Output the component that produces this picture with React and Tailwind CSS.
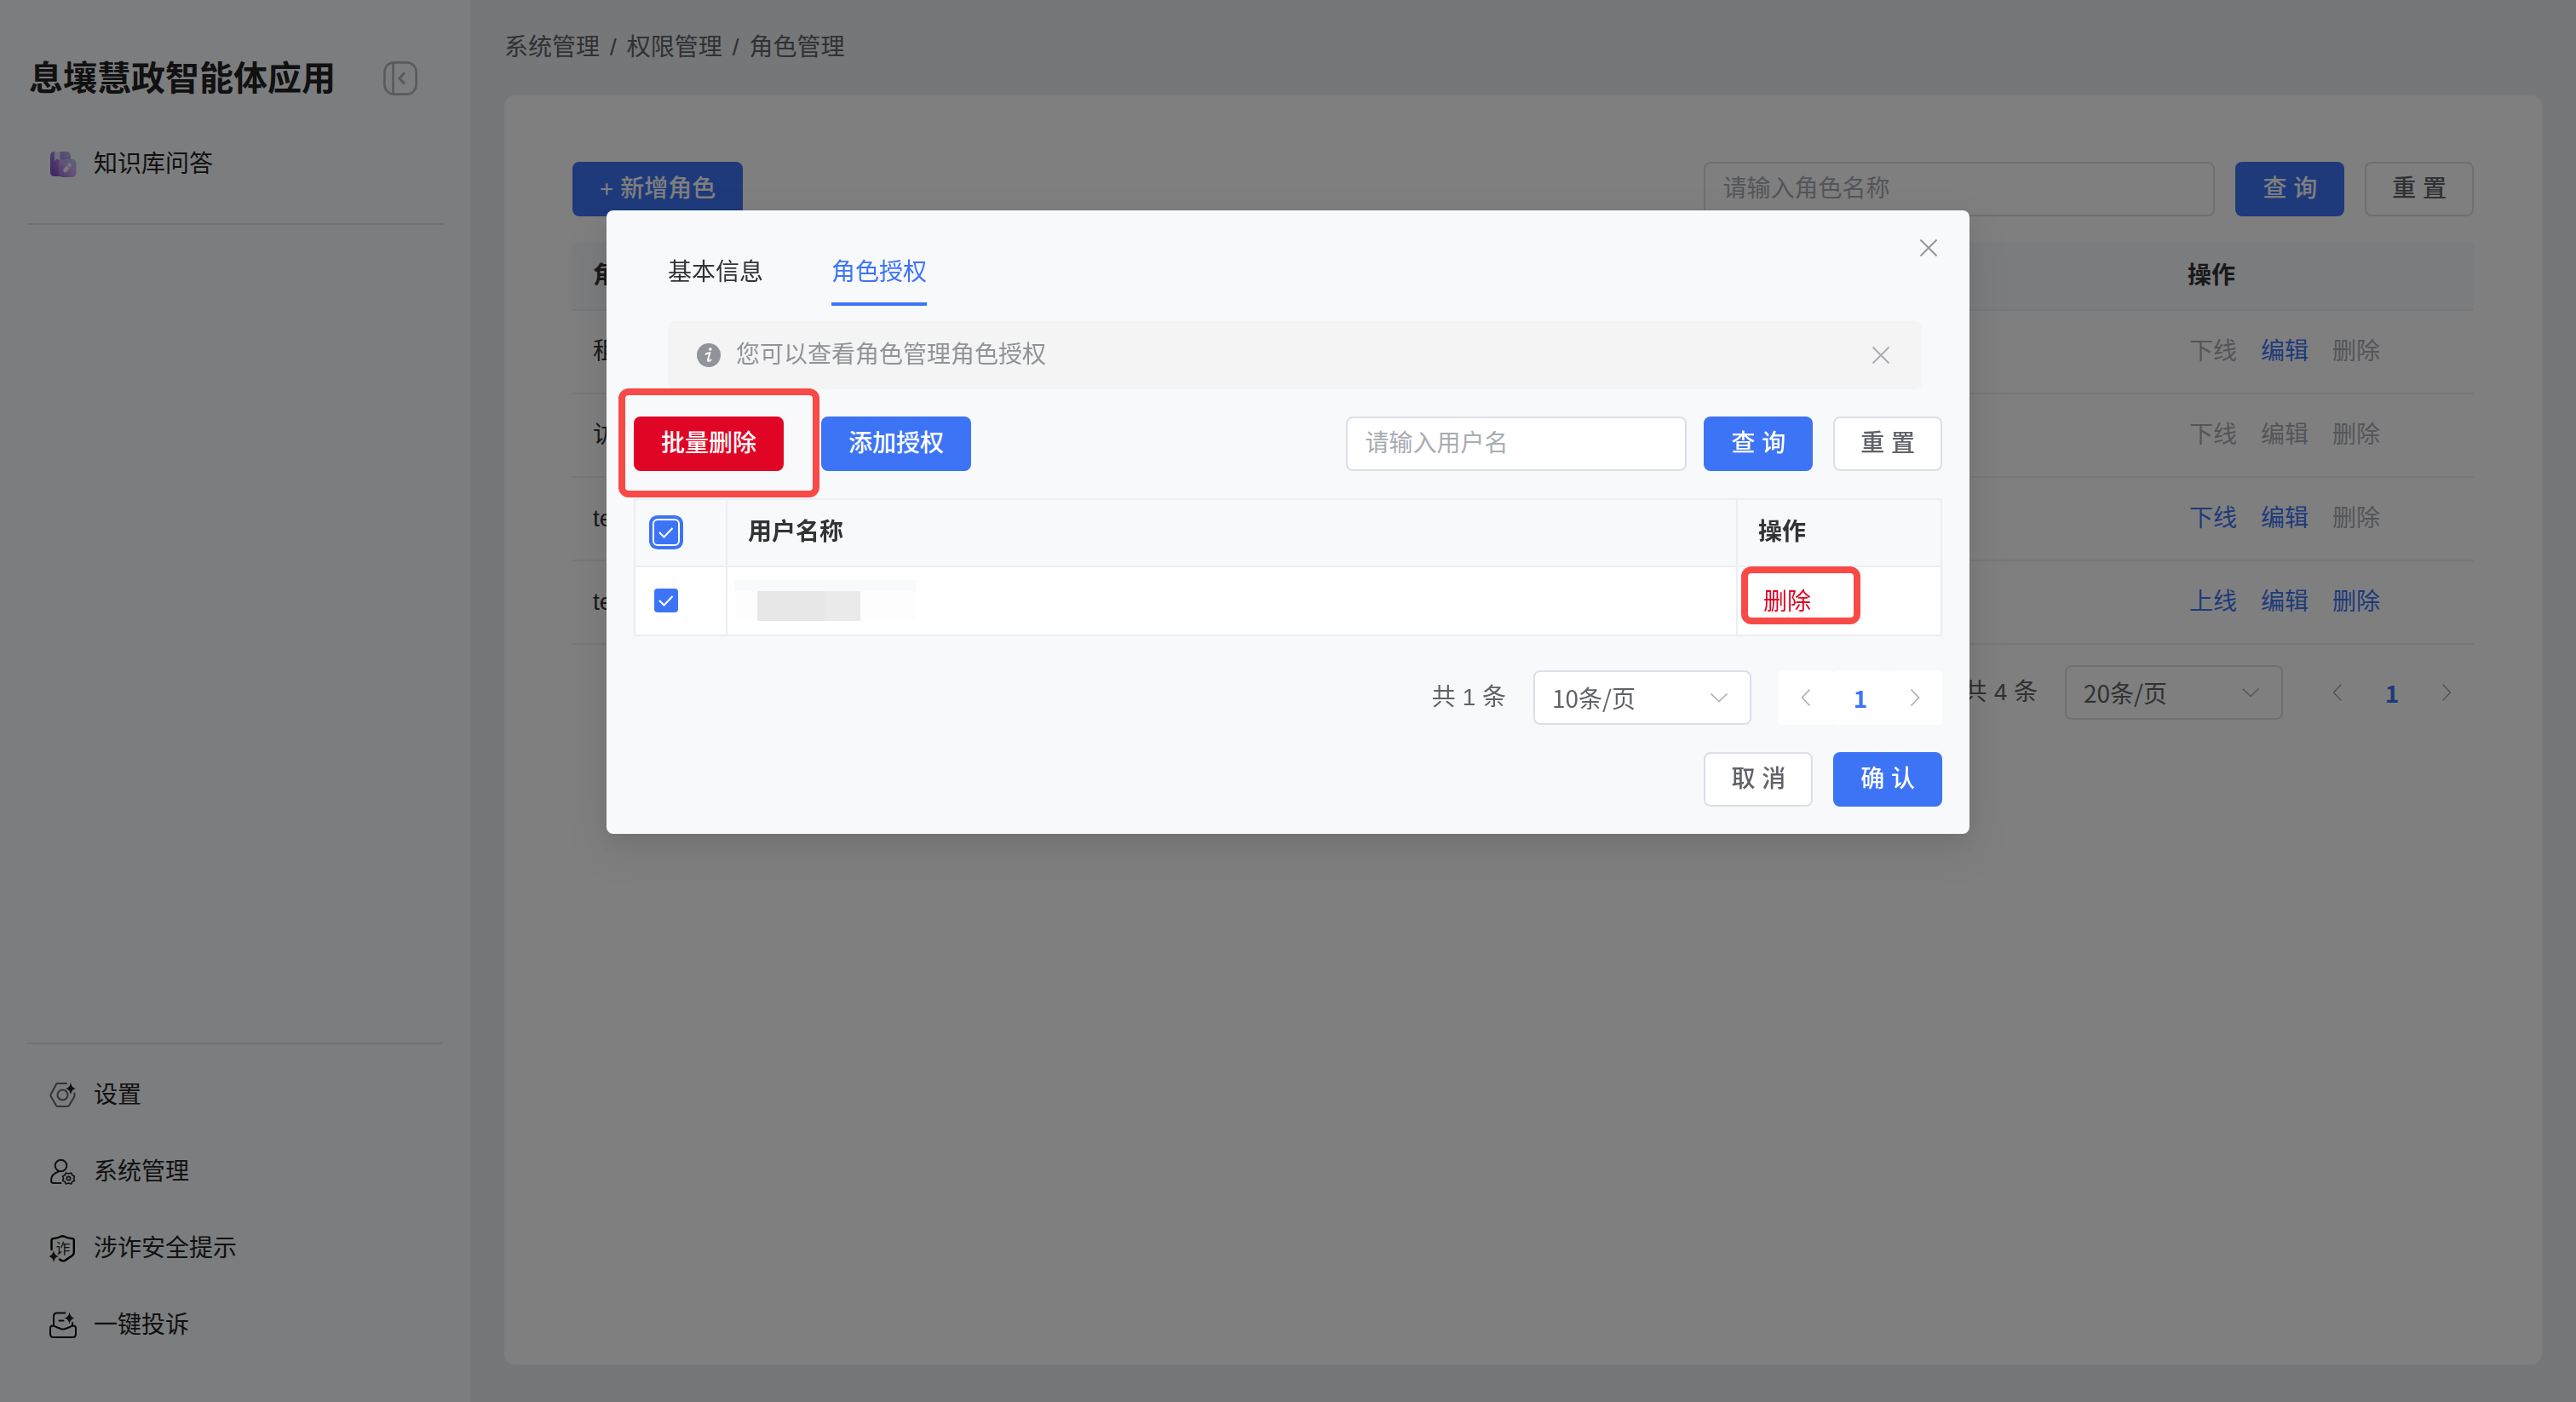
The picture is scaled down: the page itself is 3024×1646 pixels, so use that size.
import { clsx } from "clsx";

const roles = [
  { name: "租户管理员", actions: [["下线", false], ["编辑", true], ["删除", false]] },
  { name: "访客", actions: [["下线", false], ["编辑", false], ["删除", false]] },
  { name: "test1", actions: [["下线", true], ["编辑", true], ["删除", false]] },
  { name: "test2", actions: [["上线", true], ["编辑", true], ["删除", true]] },
];

const SPARK = "M0-7Q1-1 6 0Q1 1 0 7Q-1 1-6 0Q-1-1 0-7Z";

function CollapseIcon() {
  return (
    <svg className="size-10" viewBox="0 0 40 40" fill="none" stroke="#b3b4c2" strokeWidth="2.6">
      <rect x="1.4" y="1.4" width="37.2" height="37.2" rx="11" />
      <path d="M11.500 2V38" />
      <path d="M24 14.500L19 20L24 25.500" strokeWidth="3.2" strokeLinecap="round" strokeLinejoin="round" />
    </svg>
  );
}

function BookIcon() {
  return (
    <svg className="size-8" viewBox="0 0 32 32">
      <defs>
        <linearGradient id="book-back" x1="0" y1="1" x2="1" y2="0">
          <stop offset="0" stopColor="#7442c8" />
          <stop offset="1" stopColor="#c2b6f5" />
        </linearGradient>
        <linearGradient id="book-front" x1="0" y1="1" x2="1" y2="0">
          <stop offset="0" stopColor="#9a63dc" />
          <stop offset="0.5" stopColor="#c9a2ee" />
          <stop offset="1" stopColor="#b4cbf5" />
        </linearGradient>
      </defs>
      <path d="M6 1H20Q25 1 25 6V30H6Q1 30 1 25V6Q1 1 6 1Z" fill="url(#book-back)" />
      <path d="M6 1H12.500V12L9 9.500L6 12Z" fill="#e4dcf7" />
      <rect x="10.500" y="10" width="21" height="21" rx="5" fill="url(#book-front)" />
      <path d="M18.500 23L23.500 17" stroke="#f4effc" strokeWidth="4.600" strokeLinecap="round" />
      <path d="M20.500 17L24 20" stroke="#b48fe6" strokeWidth="1" />
    </svg>
  );
}

function SettingsIcon() {
  return (
    <svg className="size-8" viewBox="0 0 32 32" fill="none" stroke="#666" strokeWidth="2" strokeLinejoin="round" strokeLinecap="round">
      <path d="M20 2H9.500Q8.500 2 8 2.900L1.600 15Q1 16 1.600 17L8 28.100Q8.500 29 9.500 29H21Q22.500 29 23 28.100L29 18Q30 16 29.300 13.500" />
      <circle cx="15.500" cy="15.500" r="6" />
      <path d={SPARK} transform="translate(25 8)" fill="#222" stroke="none" />
    </svg>
  );
}

function UserGearIcon() {
  return (
    <svg className="size-8" viewBox="0 0 32 32" fill="none" stroke="#222" strokeWidth="2" strokeLinejoin="round" strokeLinecap="round">
      <circle cx="13.500" cy="8.500" r="6.800" />
      <path d="M11 15.500Q2 18 2 26Q2 29 5 29H13.500" />
      <path
        d="M19.500 17L22.500 18L25.500 17L27 19.800L29.500 21L28.500 23.500L29.500 26L27 27.200L25.500 30L22.500 29L19.500 30L18 27.200L15.500 26L16.500 23.500L15.500 21L18 19.800Z"
        strokeWidth="1.700"
      />
      <circle cx="22.500" cy="23.500" r="2.200" strokeWidth="1.700" />
    </svg>
  );
}

function ShieldIcon() {
  return (
    <svg className="size-8" viewBox="0 0 32 32" fill="none" stroke="#000" strokeWidth="2.400" strokeLinejoin="round" strokeLinecap="round">
      <path d="M2.500 17V6Q2.500 4.500 4 4.200Q10 3.500 13.500 1.700Q15.500 0.800 17.500 1.700Q21 3.500 27 4.200Q28.800 4.500 28.800 6V20Q28.800 22.500 27 24L18 30Q15.500 31.300 12 28.500" />
      <text x="7.500" y="21.500" fontSize="17" fill="#222" stroke="none">诈</text>
      <path d={SPARK} transform="translate(5 25)" fill="#222" stroke="none" />
    </svg>
  );
}

function ComplaintIcon() {
  return (
    <svg className="size-8" viewBox="0 0 32 32" fill="none" stroke="#111" strokeWidth="2" strokeLinejoin="round" strokeLinecap="round">
      <path d="M18.500 1.500H9Q5 1.500 5 5.500V16.500M27 13V16.500" />
      <path d="M11.500 10.500H16.500" />
      <path d="M4 16.500Q1 16.500 1 19.500V26Q1 30 4.500 30H27.500Q31 30 31 26V19.500Q31 16.500 28 16.500Q26 16.500 24 18L18 20.200Q16 21 14 20.200L8 18Q6 16.500 4 16.500Z" />
      <path d={SPARK} transform="translate(23.500 7.500)" fill="#222" stroke="none" />
    </svg>
  );
}

function CloseIcon() {
  return (
    <svg className="size-6" viewBox="0 0 24 24" fill="none" stroke="currentColor" strokeWidth="1.8">
      <path d="M2.500 2.500L21.500 21.500M21.500 2.500L2.500 21.500" />
    </svg>
  );
}

function Chevron({ className }) {
  return (
    <svg className={clsx("size-6", className)} viewBox="0 0 24 24" fill="none" stroke="currentColor" strokeWidth="1.600">
      <path d="M2.500 7.500L12 16.500L21.500 7.500" />
    </svg>
  );
}

function Button({ variant = "default", children }) {
  return (
    <button
      type="button"
      className={clsx(
        "h-16 shrink-0 rounded-lg px-8 font-medium whitespace-nowrap",
        variant === "primary" && "bg-[#3d74f6] text-white",
        variant === "danger" && "bg-[#e10525] text-white",
        variant === "default" && "border-2 border-[#dcdfe6] bg-white px-[30px] text-[#606266]"
      )}
    >
      {children}
    </button>
  );
}

function Pagination({ total, size }) {
  return (
    <div className="flex items-center justify-end gap-8 text-[#606266]">
      <span>共 {total} 条</span>
      <div className="relative">
        <select
          aria-label="每页条数"
          className="h-16 w-64 appearance-none rounded-lg border-2 border-[#dcdfe6] bg-white px-5 font-['Noto_Sans_CJK_SC',sans-serif]"
        >
          <option>{size}条/页</option>
        </select>
        <Chevron className="pointer-events-none absolute top-5 right-[26px] text-[#a8abb2]" />
      </div>
      <div className="flex text-[#a8abb2]">
        <button type="button" aria-label="上一页" className="flex size-16 items-center justify-center rounded bg-white">
          <Chevron className="rotate-90" />
        </button>
        <button type="button" className="size-16 rounded bg-white font-['Noto_Sans_CJK_SC',sans-serif] font-bold text-[#3d74f6]">
          1
        </button>
        <button type="button" aria-label="下一页" className="flex size-16 items-center justify-center rounded bg-white">
          <Chevron className="-rotate-90" />
        </button>
      </div>
    </div>
  );
}

function Checkbox({ label, focused }) {
  return (
    <span className="relative block size-7">
      <input
        type="checkbox"
        defaultChecked
        aria-label={label}
        className={clsx(
          "block size-7 appearance-none rounded bg-[#3d74f6]",
          focused && "ring-4 ring-[#3d74f6] ring-offset-2 ring-offset-white"
        )}
      />
      <svg className="pointer-events-none absolute inset-0 size-7" viewBox="0 0 28 28" fill="none" stroke="#fff" strokeWidth="2">
        <path d="M6 14L11.500 19.500L21.500 9" />
      </svg>
    </span>
  );
}

function Sidebar() {
  const links = [
    ["设置", SettingsIcon],
    ["系统管理", UserGearIcon],
    ["涉诈安全提示", ShieldIcon],
    ["一键投诉", ComplaintIcon],
  ];
  return (
    <aside className="flex w-[552px] shrink-0 flex-col bg-[#f9fafd] px-8 text-[#222]">
      <div className="mt-16 flex h-14 items-center justify-between pr-[30px] pl-0.5">
        <h1 className="text-[40px] font-bold">息壤慧政智能体应用</h1>
        <button type="button" aria-label="收起菜单">
          <CollapseIcon />
        </button>
      </div>
      <a href="#" className="mt-7 flex h-[90px] items-center gap-5 px-[26px]">
        <BookIcon />
        知识库问答
      </a>
      <div className="mt-6 grow border-y-2 border-[#e3e5e8]" />
      <nav className="mt-[15px] mb-[45px] flex flex-col">
        {links.map(([label, Icon]) => (
          <a key={label} href="#" className="flex h-[90px] items-center gap-5 px-[26px]">
            <Icon />
            {label}
          </a>
        ))}
      </nav>
    </aside>
  );
}

function RolePage() {
  return (
    <main className="flex grow flex-col bg-[#eceef1] px-10 pb-11">
      <div className="flex h-28 items-center gap-3 text-[#606266]">
        <span>系统管理</span>
        <span>/</span>
        <span>权限管理</span>
        <span>/</span>
        <span>角色管理</span>
      </div>
      <section className="grow rounded-xl bg-white px-20 pt-[78px]">
        <div className="flex items-center gap-6">
          <Button variant="primary">+ 新增角色</Button>
          <input
            aria-label="角色名称"
            placeholder="请输入角色名称"
            className="ml-auto h-16 w-[600px] rounded-lg border-2 border-[#dcdfe6] px-5 placeholder:text-[#a8abb2]"
          />
          <Button variant="primary">查 询</Button>
          <Button>重 置</Button>
        </div>
        <table className="mt-[31px] w-full table-fixed border-separate border-spacing-0 text-left text-[#333]">
          <thead>
            <tr className="h-20 bg-[#f7f9fc]">
              <th className="border-b-2 border-[#ebeef5] px-6 font-bold">角色</th>
              <th className="w-[360px] border-b-2 border-[#ebeef5] px-6 font-bold">操作</th>
            </tr>
          </thead>
          <tbody>
            {roles.map((role) => (
              <tr key={role.name} className="h-[98px]">
                <td className="border-b-2 border-[#ebeef5] px-6">{role.name}</td>
                <td className="border-b-2 border-[#ebeef5] px-[26px]">
                  <div className="flex gap-7">
                    {role.actions.map(([label, enabled]) => (
                      <button
                        key={label}
                        type="button"
                        disabled={!enabled}
                        className={enabled ? "text-[#3d74f6]" : "text-[#a8abb2]"}
                      >
                        {label}
                      </button>
                    ))}
                  </div>
                </td>
              </tr>
            ))}
          </tbody>
        </table>
        <div className="mt-6">
          <Pagination total={4} size={20} />
        </div>
      </section>
    </main>
  );
}

function AuthDialog() {
  return (
    <div
      role="dialog"
      aria-label="角色授权"
      className="relative w-[1600px] max-w-full rounded-lg bg-[#f7f9fb] px-8 pb-8 text-[#333] shadow-[0_12px_32px_rgba(0,0,0,0.08),0_18px_56px_16px_rgba(0,0,0,0.05)]"
    >
      <button type="button" aria-label="关闭" className="absolute top-8 right-9 text-[#909399]">
        <CloseIcon />
      </button>
      <div role="tablist" className="flex gap-20 px-10 pt-8">
        <button type="button" role="tab" className="h-20 border-b-4 border-transparent pt-1.5">
          基本信息
        </button>
        <button type="button" role="tab" aria-selected="true" className="h-20 border-b-4 border-[#3d74f6] pt-1.5 text-[#3d74f6]">
          角色授权
        </button>
      </div>
      <div className="mt-[18px] mr-6 ml-10 flex h-20 items-center rounded-lg bg-[#f4f4f4] pr-9 pl-[34px] text-[#909399]">
        <svg className="mr-[18px] size-7" viewBox="0 0 28 28">
          <circle cx="14" cy="14" r="14" fill="#909399" />
          <circle cx="15.800" cy="7" r="1.800" fill="#fff" />
          <path d="M10.500 12.800Q13.500 10.800 15.300 11.300L13 19.500Q12.500 22.500 16.500 19.500" fill="none" stroke="#fff" strokeWidth="2" strokeLinecap="round" />
        </svg>
        您可以查看角色管理角色授权
        <button type="button" aria-label="关闭提示" className="ml-auto text-[#a8abb2]">
          <CloseIcon />
        </button>
      </div>
      <div className="mt-8 flex items-center">
        <div className="relative mr-11">
          <Button variant="danger">批量删除</Button>
          <div className="pointer-events-none absolute -top-[33px] -right-[42px] -bottom-[31px] -left-[18px] rounded-xl border-8 border-[#f84a46]" />
        </div>
        <Button variant="primary">添加授权</Button>
        <input
          aria-label="用户名"
          placeholder="请输入用户名"
          className="mr-5 ml-auto h-16 w-[400px] rounded-lg border-2 border-[#dcdfe6] bg-white px-5 placeholder:text-[#a8abb2]"
        />
        <div className="flex gap-6">
          <Button variant="primary">查 询</Button>
          <Button>重 置</Button>
        </div>
      </div>
      <table className="mt-8 w-full table-fixed border-separate border-spacing-0 border-t-2 border-l-2 border-[#ebeef5] text-left">
        <thead>
          <tr className="h-[79px]">
            <th className="w-[108px] border-r-2 border-b-2 border-[#ebeef5] px-[22px]">
              <Checkbox label="全选" focused />
            </th>
            <th className="border-r-2 border-b-2 border-[#ebeef5] px-6 font-bold">用户名称</th>
            <th className="w-60 border-r-2 border-b-2 border-[#ebeef5] px-6 font-bold">操作</th>
          </tr>
        </thead>
        <tbody>
          <tr className="h-[81px] bg-white">
            <td className="border-r-2 border-b-2 border-[#ebeef5] px-[22px]">
              <Checkbox label="选择用户" />
            </td>
            <td className="border-r-2 border-b-2 border-[#ebeef5] px-2">
              <div className="h-12 w-[214px] bg-[#fdfdfd]">
                <div className="h-[13px] bg-[#f9fafc]" />
                <div className="ml-[27px] flex h-[35px] w-[121px]">
                  <div className="w-20 bg-[#e7e7e7]" />
                  <div className="grow bg-[#eaeaea]" />
                </div>
              </div>
            </td>
            <td className="border-r-2 border-b-2 border-[#ebeef5] px-[30px]">
              <div className="relative w-14">
                <button type="button" className="block pt-1 text-[#e10525]">
                  删除
                </button>
                <div className="pointer-events-none absolute -top-[18px] -left-[26px] h-[68px] w-[140px] rounded-xl border-8 border-[#f84a46]" />
              </div>
            </td>
          </tr>
        </tbody>
      </table>
      <div className="mt-10">
        <Pagination total={1} size={10} />
      </div>
      <div className="mt-8 flex justify-end gap-6">
        <Button>取 消</Button>
        <Button variant="primary">确 认</Button>
      </div>
    </div>
  );
}

export default function App() {
  return (
    <div className="flex min-h-screen font-['Liberation_Sans','Noto_Sans_CJK_SC',sans-serif] text-[28px] leading-10">
      <Sidebar />
      <RolePage />
      <div className="fixed inset-0 flex items-start justify-center overflow-auto bg-black/50 pt-[15vh]">
        <AuthDialog />
      </div>
    </div>
  );
}
